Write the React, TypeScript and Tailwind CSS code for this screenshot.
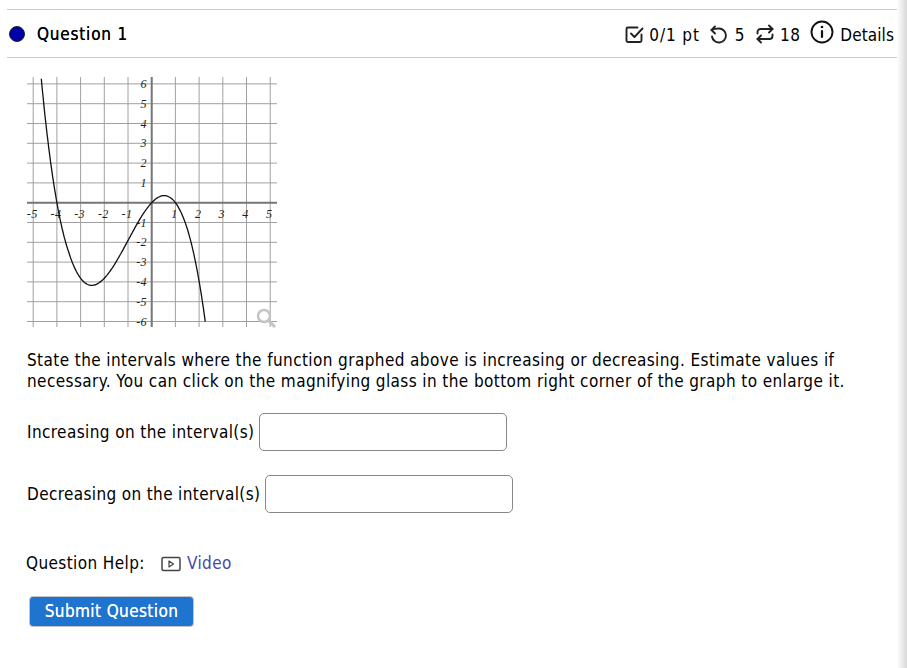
const xs = [-5, -4, -3, -2, -1, 1, 2, 3, 4, 5];
const ys = [6, 5, 4, 3, 2, 1, -1, -2, -3, -4, -5, -6];

const px = (x: number) => 151.7 + x * 23.7;
const py = (y: number) => 202.7 - y * 19.8;

function curve() {
  const pts: string[] = [];
  for (let x = -4.9; x <= 2.5; x += 0.04) {
    const a = -0.318 - 0.036 * Math.max(0, -3.5 - x) - 0.025 * Math.max(0, x - 1.5);
    const y = a * (x + 4) * x * (x - 1);
    const sy = py(y);
    if (sy >= 77 && sy <= 327) pts.push(`${px(x).toFixed(1)},${sy.toFixed(1)}`);
  }
  return pts.join(' ');
}

function Graph() {
  return (
    <svg width="260" height="262" viewBox="20 72 260 262" className="block">
      {[...xs, 0].map((x) => (
        <line key={x} x1={px(x)} x2={px(x)} y1={77} y2={327} stroke="#a0a0a0" />
      ))}
      {[...ys, 0].map((y) => (
        <line key={y} x1={27} x2={277} y1={py(y)} y2={py(y)} stroke="#a0a0a0" />
      ))}
      <line x1={27} x2={277} y1={py(0)} y2={py(0)} stroke="#777" strokeWidth="2" />
      <line x1={px(0)} x2={px(0)} y1={77} y2={327} stroke="#777" strokeWidth="2" />
      {xs.map((x) => (
        <text key={x} x={px(x) - 1} y={218} textAnchor="middle" fontSize="12" fontStyle="italic" fontFamily="Liberation Serif, serif" fill="#222">{x}</text>
      ))}
      {ys.map((y) => (
        <text key={y} x={147} y={py(y) + 4} textAnchor="end" fontSize="12" fontStyle="italic" fontFamily="Liberation Serif, serif" fill="#222">{y}</text>
      ))}
      <polyline points={curve()} fill="none" stroke="#111" strokeWidth="1.3" />
      <circle cx={264} cy={316} r={6} fill="none" stroke="#c4c4c4" strokeWidth="2.5" />
      <line x1={268.5} y1={320.5} x2={275} y2={327} stroke="#c4c4c4" strokeWidth="3" />
    </svg>
  );
}

function CheckIcon() {
  return (
    <svg width="19" height="20" viewBox="0 0 19 20" fill="none" stroke="#222" strokeWidth="1.9" strokeLinecap="round" strokeLinejoin="round">
      <path d="M16.5 10.5v6a1.5 1.5 0 0 1-1.5 1.5H3a1.5 1.5 0 0 1-1.5-1.5V5A1.5 1.5 0 0 1 3 3.5h9.5" />
      <path d="M6 9.5l3.5 3.5 8-8.5" />
    </svg>
  );
}

function RetryIcon() {
  return (
    <svg width="20" height="20" viewBox="0 0 20 20" fill="none" stroke="#222" strokeWidth="1.9" strokeLinecap="round" strokeLinejoin="round">
      <path d="M7 2.5L3.5 6 7 9.5" />
      <path d="M3.5 6C6 4.8 9 4.5 11 4.5a7 7 0 1 1-7 8" />
    </svg>
  );
}

function RepeatIcon() {
  return (
    <svg width="20" height="20" viewBox="0 0 20 20" fill="none" stroke="#222" strokeWidth="1.9" strokeLinecap="round" strokeLinejoin="round">
      <path d="M14 1.5l3.5 3.5L14 8.5" />
      <path d="M2.5 9.5V8a3 3 0 0 1 3-3h12" />
      <path d="M6 18.5L2.5 15 6 11.5" />
      <path d="M17.5 10.5V12a3 3 0 0 1-3 3h-12" />
    </svg>
  );
}

function InfoIcon() {
  return (
    <svg width="24" height="24" viewBox="0 0 24 24" fill="none" stroke="#111" strokeWidth="1.9" strokeLinecap="round">
      <circle cx="12" cy="12" r="10.5" />
      <path d="M12 11v6" strokeWidth="2.2" />
      <circle cx="12" cy="7" r="1.3" fill="#111" stroke="none" />
    </svg>
  );
}

function VideoIcon() {
  return (
    <svg width="20" height="16" viewBox="0 0 20 16" fill="none">
      <rect x="1" y="1.5" width="18" height="13" rx="1.5" stroke="#444" strokeWidth="1.5" />
      <path d="M8 5v6l4.5-3z" stroke="#444" strokeWidth="1.2" strokeLinejoin="round" />
    </svg>
  );
}

export default function App() {
  return (
    <div className="flex h-[668px] w-[907px] overflow-hidden bg-white text-[17px] tracking-[0.4px] text-black [font-family:'DejaVu_Sans',sans-serif] [font-stretch:condensed]">
      <div className="w-[897px] pl-[7px] pt-[9px]">
        {/* Question header */}
        <div className="flex h-[49px] items-center justify-between border-y border-[#ccc] pl-[2px]">
          <div className="flex items-center gap-[12px]">
            <span className="h-[16px] w-[16px] rounded-full border border-[#222] bg-[#0000a8]" />
            <span className="mt-[3px] tracking-[0.8px] [text-shadow:0_0_0.4px_#000]">Question 1</span>
          </div>
          <div className="flex items-center pr-[3px]">
            <CheckIcon />
            <span className="ml-[5px] mt-[5px] tracking-[0.9px]">0/1 pt</span>
            <span className="ml-[8px]"><RetryIcon /></span>
            <span className="ml-[7px] mt-[5px]">5</span>
            <span className="ml-[10px]"><RepeatIcon /></span>
            <span className="ml-[5px] mt-[5px]">18</span>
            <span className="mb-[3px] ml-[10px]"><InfoIcon /></span>
            <span className="ml-[6px] mt-[5px] tracking-[0.1px]">Details</span>
          </div>
        </div>

        <div className="ml-[13px] mt-[14px]">
          <Graph />
        </div>

        <p className="ml-[20px] mt-[16px] leading-[21px] tracking-[0.4px]">
          State the intervals where the function graphed above is increasing or decreasing. Estimate values if
          <br />
          necessary. You can click on the magnifying glass in the bottom right corner of the graph to enlarge it.
        </p>

        <div className="ml-[20px] mt-[21px] flex items-center gap-[5px]">
          <span className="mt-[2px]">Increasing on the interval(s)</span>
          <input className="h-[38px] w-[248px] rounded-[5px] border border-[#888] bg-white" />
        </div>
        <div className="ml-[20px] mt-[24px] flex items-center gap-[5px]">
          <span className="mt-[2px] tracking-[0.36px]">Decreasing on the interval(s)</span>
          <input className="h-[38px] w-[248px] rounded-[5px] border border-[#888] bg-white" />
        </div>

        <div className="ml-[19px] mt-[38px] flex items-center">
          <span>Question Help:</span>
          <span className="ml-[16px]"><VideoIcon /></span>
          <a className="ml-[6px] text-[#4a46a8]">Video</a>
        </div>

        <button className="ml-[22px] mt-[19px] h-[31px] w-[165px] rounded-[4px] border border-[#c4c4c4] bg-[#1f74d0] pt-[2px] text-center font-medium text-white [text-shadow:0_0_0.4px_#fff]">
          Submit Question
        </button>
      </div>
      <div className="h-full w-[10px] bg-gradient-to-r from-[#ffffff] to-[#d8d8d8]" />
    </div>
  );
}
